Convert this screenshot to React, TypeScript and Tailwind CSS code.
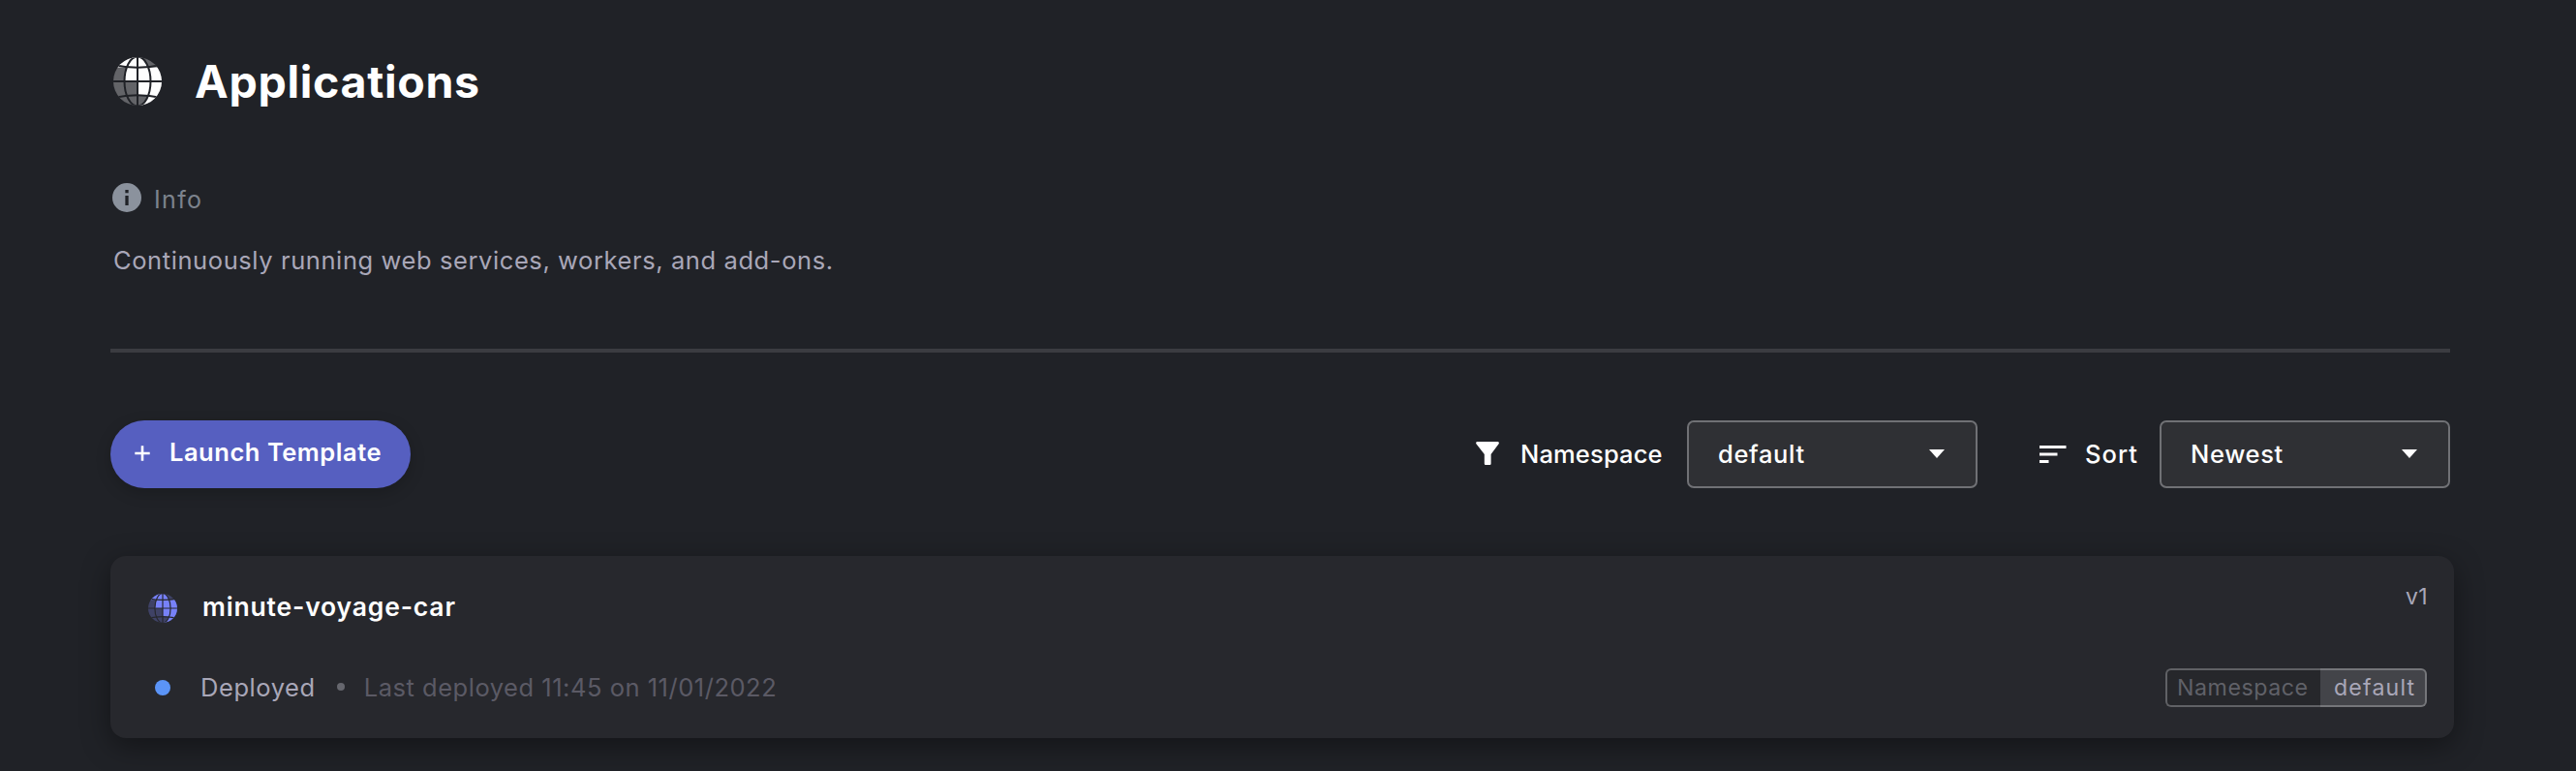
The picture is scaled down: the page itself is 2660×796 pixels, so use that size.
import { useId } from "react";

type GlobeProps = { className: string; bright: string; dim: string; line: string };

function Globe({ className, bright, dim, line }: GlobeProps) {
  const id = useId();
  return (
    <svg viewBox="0 0 50 50" className={className}>
      <defs>
        <clipPath id={`${id}-disc`}>
          <circle cx="25" cy="25" r="25" />
        </clipPath>
        <clipPath id={`${id}-core`}>
          <ellipse cx="25" cy="25" rx="13.5" ry="25.5" />
        </clipPath>
      </defs>
      <g clipPath={`url(#${id}-disc)`}>
        <rect width="50" height="50" fill={dim} />
        <rect width="25" height="10.5" fill={bright} />
        <rect x="25" y="10.5" width="25" height="40" fill={bright} />
        <g clipPath={`url(#${id}-core)`}>
          <rect width="25" height="25" fill={bright} />
          <rect x="25" width="25" height="39.5" fill={bright} />
          <rect y="25" width="25" height="25" fill={dim} />
          <rect x="25" y="39.5" width="25" height="11" fill={dim} />
        </g>
        <g fill="none" stroke={line} strokeWidth="2">
          <path d="M25 0V50M0 25H50" />
          <path d="M0 8Q25 13.5 50 8M0 42Q25 36.5 50 42" />
          <ellipse cx="25" cy="25" rx="13.5" ry="25.5" />
        </g>
      </g>
    </svg>
  );
}

function Select({ value }: { value: string }) {
  return (
    <div className="flex h-[70px] w-[300px] items-center justify-between rounded-[7px] border-2 border-[#707175] bg-[#2f3034] pr-8 pl-[30px] tracking-[0.65px]">
      <span>{value}</span>
      <svg viewBox="0 0 16 9" className="mb-px h-[9px] w-4" fill="#fff">
        <path d="M0 0H16L8 9Z" />
      </svg>
    </div>
  );
}

export default function App() {
  return (
    <main className="h-[796px] w-[2660px] overflow-hidden bg-[#202227] pt-[59px] pl-[114px] font-['Inter',sans-serif] text-[25.5px] leading-[30px] whitespace-nowrap text-white">
      <header className="flex h-[50px] items-center pl-[3px]">
        <Globe className="size-[50px]" bright="#fdfdfd" dim="#636468" line="#202227" />
        <h1 className="ml-[34px] text-[46.5px] leading-[50px] font-bold tracking-[0.69px]">Applications</h1>
      </header>

      <div className="mt-20 flex h-[30px] items-center pl-0.5">
        <svg viewBox="2 2 20 20" className="size-[30px]" fill="#8b929d">
          <path d="M12 2a10 10 0 1 0 0 20 10 10 0 0 0 0-20Zm1.1 15.4h-2.2V10.700h2.2v6.700Zm0-8.500h-2.2V6.700h2.2V8.900Z" />
        </svg>
        <span className="mt-[3px] ml-[13px] text-[25px] tracking-[1.33px] text-[#7c838d]">Info</span>
      </div>
      <p className="mt-[35px] pl-[3px] tracking-[0.59px] text-[#a9a7b8]">
        Continuously running web services, workers, and add-ons.
      </p>
      <div className="mt-[76px] h-1 w-[2416px] bg-[#3b3c41]" />

      <section className="mt-[70px] flex w-[2416px] items-center justify-between font-medium">
        <button className="flex h-[70px] w-[310px] items-center rounded-full bg-[#565fc0] pl-[25px] shadow-[0_5px_16px_#00000030]">
          <svg viewBox="0 0 16 16" className="mb-[3px] size-4" stroke="#fff" strokeWidth="2.6">
            <path d="M8 .3V15.700M.3 8H15.700" />
          </svg>
          <span className="mb-1 ml-5 font-semibold tracking-[0.53px]">Launch Template</span>
        </button>

        <div className="flex items-center">
          <svg viewBox="0 0 24 24" className="mb-0.5 size-6" fill="#fff">
            <path d="M1.200 0H22.800Q24.500.8 23.600 2.300L15.600 13V22.800Q15.600 24 14.400 24H10Q8.800 24 8.800 22.800V13L.4 2.300Q-.5.8 1.200 0Z" />
          </svg>
          <span className="ml-[22px] w-[172px] tracking-[0.15px]">Namespace</span>
          <Select value="default" />
          <svg viewBox="0 0 28 18" className="ml-16 h-[18px] w-7" fill="#fff">
            <path d="M0 0H27.500V3H0ZM0 7.500H18.500V10.500H0ZM0 15H9.500V18H0Z" />
          </svg>
          <span className="ml-[19px] w-[77px] tracking-[1px]">Sort</span>
          <Select value="Newest" />
        </div>
      </section>

      <article className="mt-[70px] flex h-[188px] w-[2420px] justify-between rounded-2xl bg-[#27282d] shadow-[0_8px_30px_#00000066]">
        <div className="pt-[38px] pl-[39px]">
          <div className="flex h-[30px] items-center">
            <Globe className="mt-px size-[30px]" bright="#7781f8" dim="#3f4266" line="#27282d" />
            <h2 className="mb-0.5 ml-[26px] text-[26.5px] font-semibold tracking-[0.83px]">minute-voyage-car</h2>
          </div>
          <div className="mt-[53px] flex h-[30px] items-center">
            <span className="ml-[7px] size-4 rounded-full bg-[#5b94f7]" />
            <span className="mb-px ml-[31px] tracking-[0.57px] text-[#a9a7b8]">Deployed</span>
            <span className="mb-0.5 ml-[22px] size-2 rounded-full bg-[#66676e]" />
            <span className="mb-px ml-5 tracking-[0.52px] text-[#5b5a65]">Last deployed 11:45 on 11/01/2022</span>
          </div>
        </div>
        <div className="flex flex-col items-end pt-[27px] pr-7">
          <span className="-mr-px text-[23px] tracking-[0.3px] text-[#a9a7b8]">v1</span>
          <div className="mt-[59px] flex h-10 w-[270px] text-[23.2px]">
            <span className="flex w-40 items-center rounded-l-md border-y-2 border-l-2 border-[#606165] bg-[#26272b] pl-2.5 tracking-[0.54px] text-[#606168]">
              Namespace
            </span>
            <span className="flex w-[110px] items-center rounded-r-md border-y-2 border-r-2 border-[#75767a] bg-[#434449] pl-3.5 tracking-[1.15px] text-[#a9a7b8]">
              default
            </span>
          </div>
        </div>
      </article>
    </main>
  );
}
